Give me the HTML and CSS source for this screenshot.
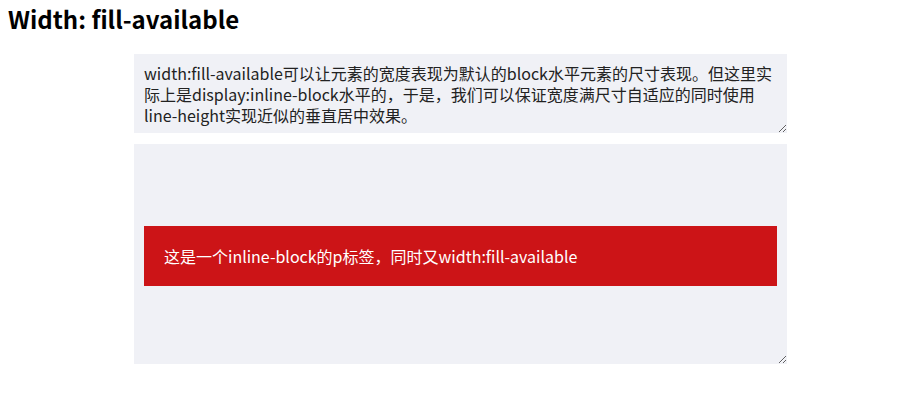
FILE: index.html
```html
<!DOCTYPE html>
<html lang="zh-CN">
<head>
<meta charset="utf-8">
<title>Width: fill-available</title>
<link rel="stylesheet" href="styles.css">
</head>
<body>
<h2 class="title">Width: fill-available</h2>
<div class="box box-text">width:fill-available可以让元素的宽度表现为默认的block水平元素的尺寸表现。但这里实际上是display:inline-block水平的，于是，我们可以保证宽度满尺寸自适应的同时使用line-height实现近似的垂直居中效果。</div>
<div class="box box-demo"><p class="bar">这是一个inline-block的p标签，同时又width:fill-available</p></div>
</body>
</html>
```
FILE: styles.css
```css
html, body {
  margin: 0;
  padding: 0;
}
body {
  padding: 4px 8px;
  font-family: "Noto Sans CJK SC", "Noto Sans", sans-serif;
  color: #000;
  background: #fff;
}
.title {
  margin: 0 0 20px;
  font-size: 24px;
  line-height: 30px;
  font-weight: 700;
}
.box {
  box-sizing: border-box;
  width: 653px;
  margin: 0 auto 11px;
  padding: 10px;
  background: #f0f1f6;
  font-size: 16px;
  line-height: 21px;
  overflow: auto;
  resize: both;
}
.box-text {
  height: 79px;
  padding-top: 9px;
  color: #222;
}
.box-demo {
  height: 220px;
  display: flex;
  align-items: center;
}
.bar {
  flex: 1;
  margin: 4px 0 0;
  padding: 0 20px;
  height: 60px;
  line-height: 60px;
  background: #cc1417;
  color: #fff;
  font-size: 16px;
}
```
